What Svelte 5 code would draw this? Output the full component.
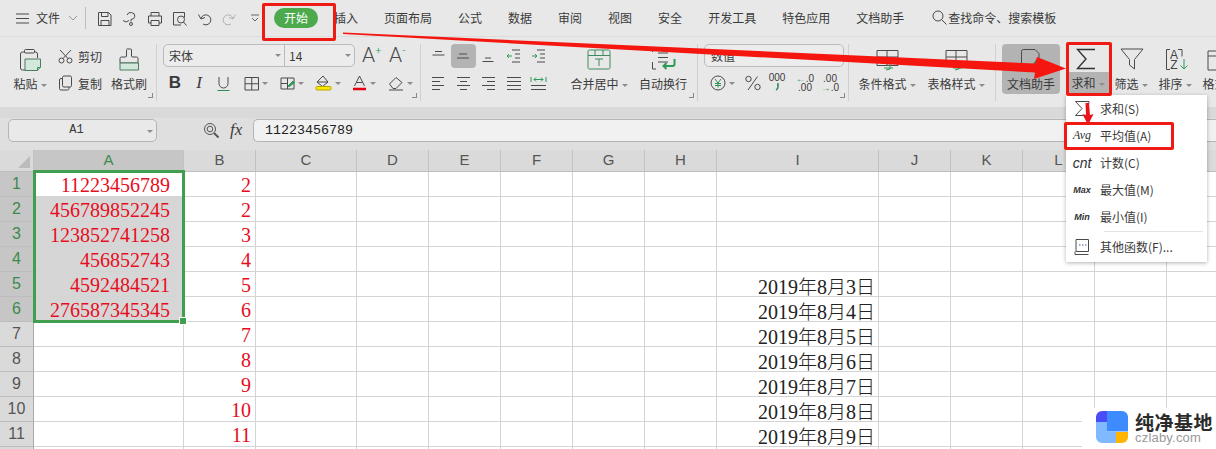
<script>
	const icons = {
		menu: '<path d="M1 3h13M1 7.500h13M1 12h13"/>',
		save: '<path d="M1.500 1.500h10l2.500 2.500v10.500h-12.500z"/><path d="M4.500 1.500v4h6.500v-4M4 14.500v-5h8v5"/>',
		saveas: '<path d="M5 4a4 3.500 0 1 1 4 4.500v2M1 9.500l3 1.500 3-1.500"/><circle cx="9" cy="13" r="1.500"/>',
		print: '<path d="M4 5v-3.500h8v3.500M4 12H1.500V5h13v7H12M4 9.500h8v5H4z"/>',
		preview: '<path d="M9 14H1.500V1.500h11v5"/><circle cx="9" cy="8.500" r="3.500"/><path d="M11.500 11l3 3.500"/>',
		undo: '<path d="M4 7.500a5 5 0 1 1 2 5.500M1.500 3.500L4 8l4-1.500"/>',
		redo: '<path d="M11 7.500a5 5 0 1 0-2 5.500M13.500 3.500L11 8 7 6.500"/>',
		paste: '<path d="M6 4H3.500a2 2 0 0 0-2 2v14a2 2 0 0 0 2 2H6M15 4h1.500a2 2 0 0 1 2 2v4"/><rect x="5.500" y="1.500" width="10" height="3.500" rx="1"/><path d="M6 11h15.500v8l-3 3.500H6z" fill="#d3e7da" stroke="#4b7d60"/><path d="M18.500 22.500v-3h3" stroke="#2e9a57"/>',
		cut: '<circle cx="3.500" cy="11.500" r="2.500"/><circle cx="11.500" cy="11.500" r="2.500"/><path d="M5 9.500L13 1M10 9.500L2 1"/>',
		copy: '<rect x="4.500" y="1" width="9" height="11" rx="1.500"/><path d="M4.500 3.500H3a1.500 1.500 0 0 0-1.500 1.500v8.500A1.500 1.500 0 0 0 3 15h6.500a1.500 1.500 0 0 0 1.500-1.500V12"/>',
		brush: '<path d="M8.500 1h4a1 1 0 0 1 1 1v6a1 1 0 0 0 1 1h4a1.500 1.500 0 0 1 1.500 1.500V15H2v-4.500A1.500 1.500 0 0 1 3.500 9h4a1 1 0 0 0 1-1V2"/><path d="M2 15h18.500v7H2z" fill="#d3e7da" stroke="#4b7d60"/>',
		underline: '<path d="M3 1v6.500a4.500 4.500 0 0 0 9 0V1"/><path d="M1.500 14.500h12" stroke="#2e8f55"/>',
		borders: '<path d="M1 1.500h13.500V14H1zM7.750 1.500V14M1 7.750h13.500"/>',
		cond: '<path d="M1 2h13v11H1zM1 7.500h6.500M7.500 2v11"/><path d="M8 10l5-5 1.500 1.500-5 4H8z" fill="#2e9a57" stroke="#2e9a57"/>',
		fill: '<path d="M8 1L2 7l5.500 4.500L13 7z"/><path d="M2 7h11"/><rect x="1" y="11.500" width="15" height="3.500" rx="1" fill="#ffe600" stroke="#b5a800"/>',
		color: '<path d="M2.500 11L7.500 1l5 10M4.500 7.500h6"/><path d="M1 14h13" stroke="#e60012" stroke-width="2.500"/>',
		eraser: '<path d="M1.500 9L8 2.500l6 5L8 13.500H5z"/><path d="M1 15h14"/>',
		at: '<path d="M4 2.500h7M1.500 6h12"/>',
		am: '<path d="M3 5h8M1 9h12"/>',
		ab: '<path d="M4 9h6M1.500 12.500h11"/>',
		ind1: '<path d="M6 2h8M9 6h5M9 10h5M6 14h8" /><path d="M6 8H1M3 6L1 8l2 2" stroke="#2e9a57"/>',
		ind2: '<path d="M6 2h8M9 6h5M9 10h5M6 14h8"/><path d="M1 8h5M4 6l2 2-2 2" stroke="#2e9a57"/>',
		l: '<path d="M1 1.500h12M1 5.500h8M1 9.500h12M1 13.500h8"/>',
		c: '<path d="M1 1.500h13M4 5.500h7M1 9.500h13M4 13.500h7"/>',
		r: '<path d="M1 1.500h13M6 5.500h8M1 9.500h13M6 13.500h8"/>',
		j: '<path d="M1 1.500h14M1 5.500h14M1 9.500h14M1 13.500h14"/>',
		d: '<path d="M1 1v5M16 1v5M4 3.500h9M4 3.500l2-2M4 3.500l2 2M13 3.500l-2-2M13 3.500l-2 2" stroke="#2e9a57"/><path d="M1 9.500h15M1 13.500h15"/>',
		merge: '<rect x="1" y="1" width="22" height="19" rx="1.500" stroke="#3f8a5f"/><path d="M1 6.500h22M8 1v5.500M16 1v5.500" stroke="#3f8a5f"/><path d="M8 10h8M12 10v7" stroke="#3f8a5f"/>',
		wrap: '<path d="M1.500 3v-1.500H5M1.500 13v7H5M20 1.500h3.500" /><path d="M7 4h10M7 8.500h10M7 13h10"/><path d="M23.500 10v5a2 2 0 0 1-2 2h-9M15.500 14l-3 3 3 3" stroke="#2e9a57" stroke-width="2"/>',
		yen: '<circle cx="8" cy="8" r="7"/><path d="M5 4l3 4 3-4M8 8v4.500M5 8.500h6M5 10.500h6" stroke="#2e8f55"/>',
		pct: '<path d="M12.500 1.500L3 15"/><circle cx="3.500" cy="4" r="2.700"/><circle cx="12.500" cy="12" r="2.700"/>',
		k: '<path d="M8 1v4q0 2-2 3M8 3H7" stroke="#2e8f55" stroke-width="1.500"/>',
		tablea: '<path d="M2 1.500h21v15H2zM2 8h21M12 1.500v15"/><path d="M15 14v6l-4 1M9 19h9" stroke="#2e9a57"/>',
		doc: '<path d="M10 22H3.500a2 2 0 0 1-2-2V3.500a2 2 0 0 1 2-2H15l4 4V11"/><path d="M13 17l3-4 3 3 3-3" stroke="#2e9a57" stroke-width="1.500"/>',
		sigma: '<path d="M19 1.500H1.500L10 11 1.500 20.500H19" stroke="#333" stroke-width="1.400"/>',
		filter: '<path d="M1 1h22L14.500 11.500V21L9.500 17V11.500z"/>',
		sort: '<path d="M5 1.500H1.500v20H5M13 1.500h4v7"/><text x="9" y="10.500" font-size="12" text-anchor="middle" fill="#444" stroke="none" font-family="Liberation Sans">A</text><text x="9" y="20.500" font-size="12" text-anchor="middle" fill="#444" stroke="none" font-family="Liberation Sans">Z</text><path d="M19 11v10M15.500 17.500l3.500 3.500 3.500-3.500" stroke="#2e9a57"/>',
		grid: '<path d="M1 3h23v19H1zM1 8h23"/><path d="M12 8v14" stroke="#2e9a57"/>',
		sigmasm: '<path d="M15 3.500V1.500H1.500L8 8.500 1.500 15.500H15V13.500"/>',
		func: '<path d="M2 1.500h12.500v12H2zM1 13.500v3h13.500"/><path d="M5 7h1.500M8 7h1.500M11 7h1.500" stroke="#3c5f9c"/>',
		search: '<circle cx="6" cy="6" r="5"/><path d="M9.500 9.500l5 5"/>',
		mag: '<circle cx="7" cy="7" r="5.500"/><circle cx="7" cy="7" r="2.800"/><path d="M11 11l4.500 4.500" stroke-width="2"/>'
	};

	const tabs = ["页面布局", "公式", "数据", "审阅", "视图", "安全", "开发工具", "特色应用", "文档助手"];

	const columns = [
		["A", 150], ["B", 72], ["C", 101], ["D", 72], ["E", 72], ["F", 72], ["G", 72], ["H", 72],
		["I", 162], ["J", 72], ["K", 72], ["L", 72], ["M", 72], ["N", 72]
	];
	const col_a = ["11223456789", "456789852245", "123852741258", "456852743", "4592484521", "276587345345"];
	const dates = { 5: 3, 6: 4, 7: 5, 8: 6, 9: 7, 10: 8, 11: 9 };
	const rows = Array.from({ length: 12 }, (_, i) => i + 1);
	const sheet_template = `34px ${columns.map((c) => c[1] + "px").join(" ")}`;

	const menu = [
		["sigmasm", "求和(S)"],
		["avg", "平均值(A)"],
		["cnt", "计数(C)"],
		["max", "最大值(M)"],
		["min", "最小值(I)"]
	];
</script>

{#snippet ic(name, w, h)}
	<svg class="ic" width={w} height={h} viewBox={`0 0 ${w} ${h}`}>{@html icons[name]}</svg>
{/snippet}

{#snippet big(name, w, h, label, caret, cls)}
	<div class={`big ${cls}`}>
		<div class="big-icon">{@render ic(name, w, h)}</div>
		<div class="big-label">{label}{#if caret}<i class="caret"></i>{/if}</div>
	</div>
{/snippet}

<div class="app">
	<header class="tabs">
		<div class="file">
			{@render ic("menu", 15, 15)}
			<span>文件</span>
			<svg class="chev" width="10" height="6" viewBox="0 0 10 6"><path d="M1 1l4 4 4-4" /></svg>
		</div>
		<div class="quick">
			{@render ic("save", 15, 15)}
			{@render ic("saveas", 15, 15)}
			{@render ic("print", 15, 15)}
			{@render ic("preview", 15, 15)}
			{@render ic("undo", 15, 15)}
			<span class="faded">{@render ic("redo", 15, 15)}</span>
			<svg class="more" width="10" height="8" viewBox="0 0 10 8"><path d="M1 1h8M2 4l3 3 3-3" /></svg>
		</div>
		<nav class="tablist">
			<span class="pill">开始</span>
			<span>插入</span>
			{#each tabs as tab}
				<span>{tab}</span>
			{/each}
			<span class="find">{@render ic("search", 15, 15)}查找命令、搜索模板</span>
		</nav>
	</header>

	<section class="ribbon">
		<div class="group g-clip">
			{@render big("paste", 22, 24, "粘贴", true, "paste")}
			<div class="small-col">
				<div class="small">{@render ic("cut", 15, 15)}剪切</div>
				<div class="small">{@render ic("copy", 15, 16)}复制</div>
			</div>
			{@render big("brush", 22, 24, "格式刷", false, "brush")}
			<i class="corner"></i>
		</div>

		<div class="group g-font">
			<div class="combo font-combo">
				<span class="combo-a">宋体<i class="caret"></i></span>
				<span class="combo-b">14<i class="caret"></i></span>
			</div>
			<span class="grow">A<sup>+</sup></span>
			<span class="grow">A<sup>-</sup></span>
			<div class="font-tools">
				<span class="tool t24 bold">B</span>
				<span class="tool t24 ital">I</span>
				<span class="tool t24">{@render ic("underline", 15, 15)}</span>
				<span class="tool t36 first-wide">{@render ic("borders", 15, 15)}<i class="caret"></i></span>
				<span class="tool t36">{@render ic("cond", 15, 15)}<i class="caret"></i></span>
				<span class="tool t36">{@render ic("fill", 17, 16)}<i class="caret"></i></span>
				<span class="tool t36">{@render ic("color", 15, 16)}<i class="caret"></i></span>
				<span class="tool t36">{@render ic("eraser", 16, 16)}<i class="caret"></i></span>
			</div>
			<i class="corner"></i>
		</div>

		<div class="group g-align">
			<div class="align-grid">
				<span>{@render ic("at", 15, 15)}</span>
				<span class="on">{@render ic("am", 15, 15)}</span>
				<span>{@render ic("ab", 15, 15)}</span>
				<span>{@render ic("ind1", 15, 16)}</span>
				<span>{@render ic("ind2", 15, 16)}</span>
				<span>{@render ic("l", 15, 15)}</span>
				<span>{@render ic("c", 15, 15)}</span>
				<span>{@render ic("r", 15, 15)}</span>
				<span>{@render ic("j", 16, 15)}</span>
				<span>{@render ic("d", 17, 15)}</span>
			</div>
			{@render big("merge", 24, 21, "合并居中", true, "merge")}
			{@render big("wrap", 25, 22, "自动换行", false, "wrap")}
			<i class="corner"></i>
		</div>

		<div class="group g-num">
			<div class="combo num-combo"><span>数值</span></div>
			<div class="num-tools">
				<span class="tool yen">{@render ic("yen", 16, 16)}<i class="caret"></i></span>
				<span class="tool pct">{@render ic("pct", 16, 16)}</span>
				<span class="tool kilo"><b>000</b>{@render ic("k", 15, 9)}</span>
				<span class="tool dec dec-a"><b><em>←</em>.0</b><b>.00</b></span>
				<span class="tool dec dec-b"><b>.00</b><b><em>→</em>.0</b></span>
			</div>
			<i class="corner"></i>
		</div>

		<div class="group g-style">
			{@render big("tablea", 25, 22, "条件格式", true, "style-a")}
			{@render big("tablea", 25, 22, "表格样式", true, "style-b")}
		</div>

		<div class="group g-edit">
			{@render big("doc", 23, 24, "文档助手", false, "helper")}
			{@render big("sigma", 20, 22, "求和", true, "sum")}
			{@render big("filter", 24, 23, "筛选", true, "flt")}
			{@render big("sort", 25, 23, "排序", true, "srt")}
			{@render big("grid", 25, 24, "格式", true, "fmt")}
		</div>
	</section>

	<section class="formula">
		<div class="namebox">A1<i class="caret"></i></div>
		<span class="mag">{@render ic("mag", 17, 17)}</span>
		<span class="fx">fx</span>
		<div class="input">11223456789</div>
	</section>

	<section class="sheet" style={`grid-template-columns: ${sheet_template}`}>
		<div class="hd corner-cell"><i></i></div>
		{#each columns as col}
			<div class="hd col" class:sel={col[0] === "A"}>{col[0]}</div>
		{/each}
		{#each rows as row}
			<div class="hd rowh" class:sel={row <= 6}>{row < 12 ? row : ""}</div>
			{#each columns as col}
				<div class="cell" class:range={col[0] === "A" && row > 1 && row <= 6}>
					{#if col[0] === "A" && row <= 6}
						<span class="red inset">{col_a[row - 1]}</span>
					{:else if col[0] === "B" && row <= 11}
						<span class="red">{row <= 2 ? 2 : row}</span>
					{:else if col[0] === "I" && dates[row]}
						<span class="date">2019<u>年</u>8<u>月</u>{dates[row]}<u>日</u></span>
					{/if}
				</div>
			{/each}
		{/each}
		<div class="selection"><i></i></div>
	</section>

	<div class="dropdown">
		{#each menu as item}
			<div class="mi">
				<span class="mi-icon">
					{#if item[0] === "sigmasm"}
						{@render ic("sigmasm", 17, 17)}
					{:else if item[0] === "avg"}
						<span class="sym">Avg</span>
					{:else if item[0] === "cnt"}
						<span class="sym cnt">cnt</span>
					{:else if item[0] === "max"}
						<span class="sym tiny">Max</span>
					{:else}
						<span class="sym tiny">Min</span>
					{/if}
				</span>
				{item[1]}
			</div>
		{/each}
		<div class="mi-sep"></div>
		<div class="mi">
			<span class="mi-icon">{@render ic("func", 16, 18)}</span>
			其他函数(F)...
		</div>
	</div>

	<div class="mark">
		<svg width="32" height="32" viewBox="0 0 32 32">
			<path d="M11 0H26a6 6 0 0 1 6 6V20.500H11z" fill="#3d8bff" />
			<path d="M0 11H11V20.500H20V32H6a6 6 0 0 1-6-6z" fill="#80b9ff" />
			<path d="M6 0H11V11H0V6a6 6 0 0 1 6-6z" fill="#4a4cf8" />
			<path d="M20 21H32V26a6 6 0 0 1-6 6H20z" fill="#ffb400" />
		</svg>
		<div class="mark-text">
			<strong>纯净基地</strong>
			<span>czlaby.com</span>
		</div>
	</div>

	<i class="redbox box-tab"></i>
	<i class="redbox box-sum"></i>
	<i class="redbox box-avg"></i>
	<svg class="arrows" width="1216" height="449" viewBox="0 0 1216 449">
		<path d="M343 32.500L1035 63.500 1037 57 1066 68.500 1034 79 1035 72.500 343 34z" fill="#f5160f" />
		<path d="M1085.500 103h3.500l1 12 3.500-1-5.500 11-5.500-11 3.500 1z" fill="#e8161a" />
	</svg>
</div>

<style>
	:global(body) {
		margin: 0;
		background: #fff;
	}

	.app {
		position: relative;
		width: 1216px;
		height: 449px;
		overflow: hidden;
		background: #e8e8e8;
		color: #3a3a3a;
		font: 12px "Noto Sans CJK SC", "Liberation Sans", sans-serif;
	}

	.ic {
		display: block;
		flex: none;
		fill: none;
		stroke: #4a4a4a;
		stroke-width: 1;
	}

	.caret {
		display: inline-block;
		width: 0;
		height: 0;
		margin-left: 3px;
		vertical-align: 2px;
		border: 3px solid transparent;
		border-top: 3px solid #8c8c8c;
		border-bottom: 0;
	}

	/* top tabs */
	.tabs {
		display: flex;
		align-items: center;
		height: 37px;
		border-bottom: 1px solid #dcdcdc;
		box-sizing: border-box;
	}

	.file {
		display: flex;
		align-items: center;
		gap: 6px;
		width: 86px;
		height: 22px;
		padding-left: 15px;
		box-sizing: border-box;
		border-right: 1px solid #bdbdbd;
	}

	.file span {
		padding-bottom: 2px;
	}

	.chev {
		margin-left: 2px;
		fill: none;
		stroke: #999;
	}

	.quick {
		display: flex;
		align-items: center;
		gap: 10px;
		width: 177px;
		padding-left: 11px;
		box-sizing: border-box;
	}

	.faded {
		opacity: 0.35;
	}

	.more {
		margin-left: 3px;
		fill: none;
		stroke: #666;
	}

	.tablist {
		display: flex;
		align-items: center;
		gap: 26px;
		margin-left: 11px;
		font-size: 12px;
		white-space: nowrap;
	}

	.tablist span {
		padding-bottom: 2px;
	}

	.tablist .pill {
		padding: 0 10px 1px;
		margin-right: -10px;
		line-height: 19px;
		border-radius: 10px;
		background: #4caa4c;
		color: #fff;
	}

	.find {
		display: flex;
		align-items: center;
		gap: 1px;
		margin-left: 2px;
	}

	/* ribbon */
	.ribbon {
		display: flex;
		height: 70px;
		padding: 7px 0 0 10px;
		box-sizing: border-box;
	}

	.group {
		position: relative;
		flex: none;
		display: flex;
		box-sizing: border-box;
		height: 57px;
		border-right: 1px solid #d0d0d0;
	}

	.corner {
		position: absolute;
		right: 3px;
		bottom: 3px;
		width: 4px;
		height: 4px;
		border-right: 1px solid #888;
		border-bottom: 1px solid #888;
	}

	.big {
		flex: none;
		display: flex;
		flex-direction: column;
		align-items: center;
		height: 50px;
		white-space: nowrap;
	}

	.big-icon {
		display: flex;
		align-items: center;
		justify-content: center;
		height: 30px;
		padding-top: 1px;
		box-sizing: border-box;
	}

	.big-label {
		line-height: 19px;
	}

	.g-clip {
		width: 147px;
	}

	.paste {
		width: 36px;
		margin-left: 2px;
	}

	.small-col {
		display: grid;
		grid-auto-rows: 24px;
		row-gap: 3px;
		width: 48px;
		margin-left: 10px;
	}

	.small {
		display: flex;
		align-items: center;
		gap: 5px;
		white-space: nowrap;
	}

	.brush {
		width: 36px;
		margin-left: 5px;
	}

	.g-font {
		width: 264px;
		flex-wrap: wrap;
		align-content: flex-start;
		padding-left: 6px;
	}

	.combo {
		display: flex;
		align-items: center;
		height: 23px;
		box-sizing: border-box;
		border: 1px solid #bbb;
		border-radius: 5px;
		background: #ececec;
	}

	.font-combo {
		width: 192px;
	}

	.combo-a {
		display: flex;
		align-items: center;
		justify-content: space-between;
		width: 121px;
		height: 100%;
		padding: 0 3px 0 5px;
		box-sizing: border-box;
		border-right: 1px solid #bbb;
	}

	.combo-b {
		display: flex;
		align-items: center;
		justify-content: space-between;
		flex: 1;
		padding: 0 3px 0 4px;
	}

	.grow {
		width: 27px;
		padding-left: 7px;
		box-sizing: border-box;
		font: 300 21px/23px Roboto, "Liberation Sans", sans-serif;
		color: #4a4a4a;
	}

	.grow sup {
		font-size: 11px;
		line-height: 0;
		vertical-align: 8px;
		color: #2e9a57;
	}

	.grow + .grow {
		width: 28px;
	}

	.font-tools {
		display: flex;
		width: 100%;
		height: 24px;
		margin-top: 4px;
	}

	.tool {
		display: flex;
		align-items: center;
		justify-content: center;
		flex: none;
	}

	.t24 {
		width: 24px;
	}

	.t36 {
		width: 36px;
	}

	.first-wide {
		margin-left: 3px;
	}

	.bold {
		font: bold 17px "Liberation Sans", sans-serif;
	}

	.ital {
		font: italic 17px "Liberation Serif", serif;
	}

	.g-align {
		width: 277px;
		padding-left: 5px;
	}

	.align-grid {
		display: grid;
		grid-template-columns: repeat(5, 25px);
		grid-auto-rows: 24px;
		row-gap: 3px;
		flex: none;
	}

	.align-grid span {
		display: flex;
		align-items: center;
		justify-content: center;
		border-radius: 4px;
	}

	.align-grid .on {
		background: #b3b3b3;
	}

	.merge {
		width: 60px;
		margin-left: 18px;
	}

	.wrap {
		width: 52px;
		margin-left: 8px;
	}

	.g-num {
		width: 151px;
		flex-wrap: wrap;
		align-content: flex-start;
		padding-left: 6px;
	}

	.num-combo {
		width: 140px;
		padding-left: 6px;
	}

	.num-tools {
		display: flex;
		height: 24px;
		margin-top: 4px;
	}

	.yen {
		width: 37px;
		justify-content: flex-start;
		padding-left: 6px;
		box-sizing: border-box;
	}

	.pct {
		width: 24px;
	}

	.kilo {
		flex-direction: column;
		justify-content: flex-start;
		width: 24px;
		padding-top: 2px;
		box-sizing: border-box;
		font: 10px/9px "Liberation Sans", sans-serif;
	}

	.kilo b,
	.dec b {
		font-weight: normal;
	}

	.dec {
		flex-direction: column;
		width: 22px;
		font: 10px/9px "Liberation Sans", sans-serif;
	}

	.dec-a {
		margin-left: 5px;
	}

	.dec-b {
		margin-left: 3px;
	}

	.dec em {
		font-style: normal;
		color: #2e9a57;
	}

	.g-style {
		width: 147px;
	}

	.style-a {
		width: 58px;
		margin-left: 9px;
	}

	.style-b {
		width: 60px;
		margin-left: 10px;
	}

	.g-edit {
		border-right: 0;
		width: 230px;
	}

	.helper {
		width: 58px;
		margin-left: 6px;
		border-radius: 4px;
		background: #b3b3b3;
	}

	.sum {
		width: 44px;
		margin-left: 6px;
	}

	.sum .big-icon {
		height: 28px;
		padding-right: 4px;
	}

	.sum .big-label {
		width: 100%;
		line-height: 22px;
		text-align: center;
		background: #b3b3b3;
	}

	.flt {
		width: 42px;
	}

	.flt .big-icon {
		padding-left: 2px;
	}

	.srt {
		width: 42px;
		margin-left: 2px;
	}

	.srt .big-icon {
		padding-left: 5px;
	}

	.fmt {
		width: 36px;
		margin-left: 5px;
	}

	/* formula bar */
	.formula {
		display: flex;
		align-items: center;
		height: 43px;
		padding: 12px 0 9px 8px;
		box-sizing: border-box;
		background: linear-gradient(#d9d9d9 11px, #dfdfdf 11px);
	}

	.namebox {
		position: relative;
		width: 149px;
		height: 23px;
		padding-right: 12px;
		box-sizing: border-box;
		border: 1px solid #b5b5b5;
		border-radius: 5px;
		background: #e9e9e9;
		font: 12px/21px "Liberation Mono", monospace;
		text-align: center;
	}

	.namebox .caret {
		position: absolute;
		top: 10px;
		right: 3px;
	}

	.mag {
		margin-left: 46px;
	}

	.mag .ic {
		stroke: #555;
	}

	.fx {
		width: 23px;
		margin-left: 10px;
		font: italic 17px "Liberation Serif", serif;
	}

	.input {
		flex: 1;
		height: 23px;
		padding-left: 11px;
		box-sizing: border-box;
		border: 1px solid #b5b5b5;
		border-right: 0;
		border-radius: 5px 0 0 5px;
		background: #f1f1f1;
		font: 13.340px/21px "Liberation Mono", monospace;
		color: #222;
	}

	/* sheet */
	.sheet {
		position: relative;
		display: grid;
		grid-auto-rows: 25px;
		grid-template-rows: 22px;
		background: #fff;
	}

	.hd {
		display: flex;
		align-items: center;
		justify-content: center;
		box-sizing: border-box;
		background: #dadada;
		color: #555;
		font: 15px "Liberation Sans", sans-serif;
		border-right: 1px solid #c2c2c2;
		border-bottom: 1px solid #bdbdbd;
	}

	.hd.col {
		padding-bottom: 2px;
	}

	.hd.sel {
		background: #c6c6c6;
		color: #3b8a4c;
	}

	.rowh {
		font-size: 16px;
		border-right: 1px solid #aaa;
	}

	.corner-cell {
		justify-content: flex-end;
		align-items: flex-end;
		padding: 0 3px 3px 0;
	}

	.corner-cell i {
		width: 0;
		height: 0;
		border-left: 12px solid transparent;
		border-bottom: 12px solid #bcbcbc;
	}

	.cell {
		display: flex;
		align-items: center;
		justify-content: flex-end;
		box-sizing: border-box;
		padding: 3px 4px 0 0;
		border-right: 1px solid #d4d4d4;
		border-bottom: 1px solid #d4d4d4;
		font: 20px "Liberation Serif", "Noto Sans CJK SC", serif;
		white-space: nowrap;
	}

	.cell.range {
		background: #d6d6d6;
	}

	.red {
		color: #e60e1e;
	}

	.inset {
		margin-right: 9px;
	}

	.date {
		color: #222;
		margin-right: -1px;
	}

	.date u {
		text-decoration: none;
		font: 300 19px "Noto Sans CJK SC", sans-serif;
	}

	.selection {
		position: absolute;
		left: 33px;
		top: 20px;
		width: 152px;
		height: 153px;
		box-sizing: border-box;
		border: 3px solid #3f9f4f;
		pointer-events: none;
	}

	.selection i {
		position: absolute;
		right: -5px;
		bottom: -5px;
		width: 6px;
		height: 6px;
		border: 1px solid #fff;
		background: #3f9f4f;
	}

	/* dropdown */
	.dropdown {
		position: absolute;
		left: 1066px;
		top: 95px;
		width: 141px;
		height: 167px;
		background: #fff;
		box-shadow: 0 1px 4px rgba(0, 0, 0, 0.3);
		color: #3a3a3a;
		font-size: 12px;
	}

	.mi {
		display: flex;
		align-items: center;
		height: 27px;
		white-space: nowrap;
	}

	.mi-icon {
		display: flex;
		justify-content: center;
		width: 34px;
		padding-right: 2px;
		box-sizing: border-box;
		flex: none;
	}

	.sym {
		font: italic 12px "Liberation Serif", serif;
		color: #333;
	}

	.cnt {
		font: italic 14px "Liberation Sans", sans-serif;
	}

	.tiny {
		font: italic bold 9px "Liberation Sans", sans-serif;
	}

	.mi-sep {
		height: 1px;
		margin: 1px 4px 1px 38px;
		background: #e4e4e4;
	}

	/* watermark */
	.mark {
		position: absolute;
		left: 1082px;
		top: 408px;
		display: flex;
		gap: 7px;
		width: 134px;
		height: 41px;
		padding: 3px 0 0 14px;
		box-sizing: border-box;
		background: #fff;
	}

	.mark-text {
		display: flex;
		flex-direction: column;
	}

	.mark-text strong {
		font-size: 19px;
		line-height: 21px;
		letter-spacing: 0.500px;
		color: #2b2b2b;
		white-space: nowrap;
	}

	.mark-text span {
		font: 13px/12px "Liberation Sans", sans-serif;
		letter-spacing: 0.200px;
		color: #999;
	}

	/* annotations */
	.redbox {
		position: absolute;
		box-sizing: border-box;
		border: 3px solid #f01a14;
		border-radius: 2px;
	}

	.box-tab {
		left: 262px;
		top: 3px;
		width: 74px;
		height: 38px;
	}

	.box-sum {
		left: 1066px;
		top: 42px;
		width: 46px;
		height: 54px;
	}

	.box-avg {
		left: 1064px;
		top: 122px;
		width: 110px;
		height: 28px;
	}

	.arrows {
		position: absolute;
		left: 0;
		top: 0;
		pointer-events: none;
	}
</style>
